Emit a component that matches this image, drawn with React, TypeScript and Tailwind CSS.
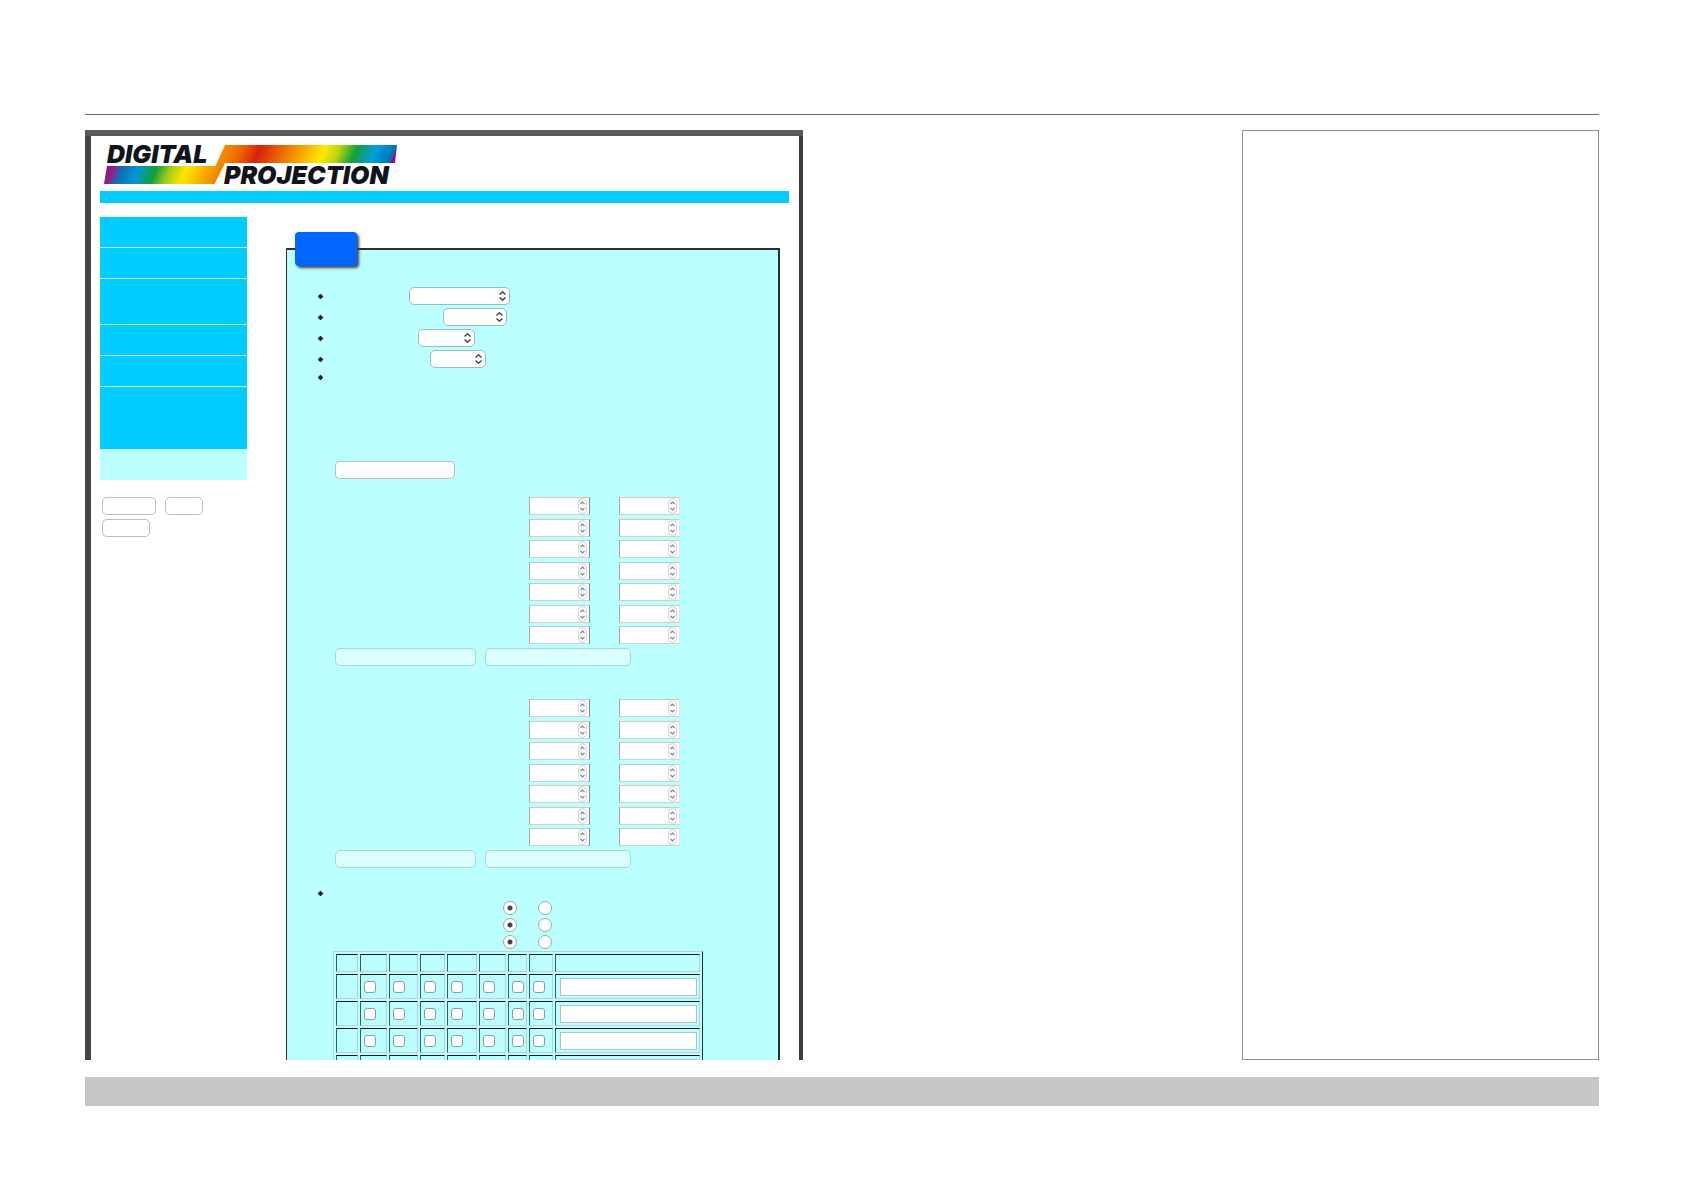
// settings page of the projector's built-in web server, shown inside a manual page
const NAV_ITEMS = [
  { label: "Home", className: "h-[31px] border-b bg-[#00ccff]" },
  { label: "Status", className: "h-[31px] border-b bg-[#00ccff]" },
  { label: "Main", className: "h-[46px] border-b bg-[#00ccff]" },
  { label: "Lamps", className: "h-[31px] border-b bg-[#00ccff]" },
  { label: "Control", className: "h-[31px] border-b bg-[#00ccff]" },
  { label: "Network", className: "h-[62px] bg-[#00ccff]" },
  { label: "Service", className: "h-[31px] bg-[#bbffff]" },
];

// margin and width of each drop-down in the list
const SELECTS = [
  { label: "Mode", className: "ml-[86px] w-[101px]" },
  { label: "Source", className: "ml-[120px] w-[64px]" },
  { label: "Level", className: "ml-[95px] w-[57px]" },
  { label: "Output", className: "ml-[107px] w-[56px]" },
];

const CHANNELS = [1, 2, 3, 4, 5, 6, 7];
const OPTIONS = ["Option 1", "Option 2", "Option 3"];
const EVENT_ROWS = [1, 2, 3, 4];
const DAYS = ["Mon", "Tue", "Wed", "Thu", "Fri", "Sat", "Sun"];

const cellClass =
  "border border-t-[#001a20] border-l-[#2a6566] border-r-[#c0ccd2] border-b-[#c0ccd2] p-0";

export default function App() {
  return (
    <div className="min-h-screen bg-white px-[85px] pt-[114px] font-['Liberation_Sans',sans-serif] text-sm">
      <hr className="border-[#666666]" />

      <div className="mt-[15px] grid grid-cols-[718fr_439fr_357fr]">
        <main className="h-[930px] overflow-hidden border-t-[6px] border-t-[#5a5a5a]">
          <div className="h-full border-r-4 border-l-[6px] border-r-[#3c3c3c] border-l-[#454548] pr-[10px] pl-[9px]">
            <Logo />
            <div className="h-3 bg-[#00ccff]" />
            <div className="flex items-start">
              <Sidebar />
              <SettingsPanel />
            </div>
          </div>
        </main>
        <aside className="col-start-3 border border-[#8f8f8f]" />
      </div>

      <footer className="mt-[17px] h-[29px] bg-[#c7c7c7]" />
    </div>
  );
}

function Logo() {
  return (
    <svg
      className="ml-1 block h-[55px] w-[294px]"
      viewBox="0 -9 294 55"
      role="img"
      aria-label="Digital Projection"
    >
      <defs>
        <linearGradient
          id="upper"
          gradientUnits="userSpaceOnUse"
          x1="115"
          y1="0"
          x2="300"
          y2="0"
          gradientTransform="skewX(-22)"
        >
          <stop offset="0" stopColor="#f59a00" />
          <stop offset="0.12" stopColor="#ee6c00" />
          <stop offset="0.23" stopColor="#d8200c" />
          <stop offset="0.34" stopColor="#ea6204" />
          <stop offset="0.48" stopColor="#f9b000" />
          <stop offset="0.58" stopColor="#ffe900" />
          <stop offset="0.66" stopColor="#b9d410" />
          <stop offset="0.75" stopColor="#12a038" />
          <stop offset="0.86" stopColor="#009ee0" />
          <stop offset="0.96" stopColor="#0071b8" />
          <stop offset="0.97" stopColor="#9a0c8c" />
          <stop offset="1" stopColor="#9a0c8c" />
        </linearGradient>
        <linearGradient
          id="lower"
          gradientUnits="userSpaceOnUse"
          x1="14"
          y1="0"
          x2="128"
          y2="0"
          gradientTransform="skewX(-22)"
        >
          <stop offset="0" stopColor="#8e1489" />
          <stop offset="0.05" stopColor="#9a1c8c" />
          <stop offset="0.1" stopColor="#1d64ae" />
          <stop offset="0.26" stopColor="#0096d6" />
          <stop offset="0.42" stopColor="#12a038" />
          <stop offset="0.54" stopColor="#9fca1c" />
          <stop offset="0.68" stopColor="#ffe600" />
          <stop offset="0.87" stopColor="#f9a800" />
          <stop offset="1" stopColor="#f08000" />
        </linearGradient>
      </defs>
      <path d="M121 0H293L291 18H120L110 39H100L111.500 21Z" fill="url(#upper)" />
      <path d="M3 21H112L121 18L110.500 39H0Z" fill="url(#lower)" />
      <g
        fill="#10151c"
        fontFamily="Inter, sans-serif"
        fontStyle="italic"
        fontWeight="900"
        fontSize="25"
      >
        <text x="3" y="18">
          DIGITAL
        </text>
        <text x="120" y="39">
          PROJECTION
        </text>
      </g>
    </svg>
  );
}

function Sidebar() {
  return (
    <div className="mt-[14px] w-[147px] shrink-0">
      <nav>
        {NAV_ITEMS.map((item) => (
          <a
            key={item.label}
            href="#"
            aria-label={item.label}
            className={`block border-[#e0ffff] ${item.className}`}
          />
        ))}
      </nav>
      <div className="mt-[17px] flex flex-wrap gap-x-[9px] gap-y-1 pl-[2px]">
        <PlainButton label="Standby" className="w-[54px] border-black/25 bg-white" />
        <PlainButton label="On" className="w-[38px] border-black/25 bg-white" />
        <PlainButton label="Logout" className="w-[48px] border-black/25 bg-white" />
      </div>
    </div>
  );
}

function SettingsPanel() {
  return (
    <section className="relative mt-[45px] mr-[9px] ml-[39px] min-w-0 flex-1 border-t-2 border-r-2 border-l border-[#2b2f30] bg-[#bbffff] pt-9 pl-[31px]">
      {/* tab that sits over the top border */}
      <div className="absolute -top-[18px] left-2 h-[34px] w-[62px] rounded-[4px] bg-[#0066ff] shadow-[2px_2px_3px_#444444]" />

      <ul>
        {SELECTS.map((item) => (
          <li key={item.label} className="flex h-[21px] items-start pt-px">
            <Bullet className="mt-[7px]" />
            <SelectBox label={item.label} className={item.className} />
          </li>
        ))}
        <li className="h-[14px] pt-[5px]">
          <Bullet />
        </li>
      </ul>

      <div className="mt-[77px] ml-[17px]">
        <PlainButton label="Update" className="w-[120px] border-black/25 bg-[#fdffff]" />
        <div className="mt-[18px]">
          <NumberGroup name="Group A" />
        </div>
        <div className="mt-[33px]">
          <NumberGroup name="Group B" />
        </div>
      </div>

      <div className="mt-[18px] h-[14px] pt-[5px]">
        <Bullet />
      </div>

      <div className="ml-[17px]">
        {OPTIONS.map((option) => (
          <div key={option} className="flex h-[17px] gap-[21px] pt-px pl-[168px]">
            <RadioButton name={option} value="on" defaultChecked />
            <RadioButton name={option} value="off" />
          </div>
        ))}
      </div>

      <EventTable />
    </section>
  );
}

function Bullet({ className = "" }: { className?: string }) {
  return (
    <svg className={`block size-[5px] shrink-0 ${className}`} viewBox="0 0 5 5">
      <path d="M2.500 0L5 2.500L2.500 5L0 2.500Z" fill="#000a0a" stroke="#000a0a" strokeWidth="0.500" />
    </svg>
  );
}

function PlainButton({ label, className }: { label: string; className: string }) {
  return (
    <button
      type="button"
      aria-label={label}
      className={`block h-[18px] rounded-[5px] border ${className}`}
    />
  );
}

function SelectBox({ label, className }: { label: string; className: string }) {
  return (
    <div className={`relative h-[18px] ${className}`}>
      <select
        aria-label={label}
        className="block h-full w-full appearance-none rounded-[5px] border border-[#9cbcbf] bg-white"
      />
      <svg
        className="pointer-events-none absolute top-1 right-1 h-[10px] w-[7px]"
        viewBox="0 0 7 10"
        fill="none"
        stroke="#3a3a3a"
        strokeWidth="1.300"
      >
        <path d="M0.500 3.500L3.500 0.800L6.500 3.500M0.500 6.500L3.500 9.200L6.500 6.500" />
      </svg>
    </div>
  );
}

function NumberGroup({ name }: { name: string }) {
  return (
    <div>
      <div className="grid h-[151px] grid-rows-7 pl-[194px]">
        {CHANNELS.map((channel) => (
          <div key={channel} className="flex gap-[29px]">
            <NumberBox label={`${name} start ${channel}`} className="border-r-[#7d8c8c]" />
            <NumberBox label={`${name} end ${channel}`} className="border-r-[#dfe4e4]" />
          </div>
        ))}
      </div>
      <div className="flex gap-[9px]">
        <PlainButton label={`Apply ${name}`} className="w-[141px] border-[#a6d6da] bg-[#dbffff]" />
        <PlainButton label={`Reset ${name}`} className="w-[146px] border-[#a6d6da] bg-[#dbffff]" />
      </div>
    </div>
  );
}

function NumberBox({ label, className }: { label: string; className: string }) {
  return (
    <div className="relative h-[18px] w-[61px]">
      <input
        type="number"
        aria-label={label}
        className={`block h-full w-full [appearance:textfield] border border-t-[#c2cccd] border-b-[#d0d2d1] border-l-[#a3abab] bg-white ${className}`}
      />
      <svg
        className="pointer-events-none absolute top-px right-[3px] h-4 w-[9px]"
        viewBox="0 0 9 16"
        fill="none"
      >
        <rect x="0.500" y="0.500" width="8" height="15" rx="4" fill="#fafafa" stroke="#d6d6da" />
        <path
          d="M2.500 6L4.500 4L6.500 6M2.500 10L4.500 12L6.500 10"
          stroke="#888888"
          strokeWidth="1.200"
        />
      </svg>
    </div>
  );
}

type RadioButtonProps = {
  name: string;
  value: string;
  defaultChecked?: boolean;
};

function RadioButton({ name, value, defaultChecked }: RadioButtonProps) {
  return (
    <input
      type="radio"
      name={name}
      value={value}
      defaultChecked={defaultChecked}
      aria-label={`${name} ${value}`}
      className="size-[14px] appearance-none rounded-full border border-[#9aabad] bg-white checked:bg-[radial-gradient(circle,#444444_2px,#ffffff_3px)]"
    />
  );
}

function EventTable() {
  return (
    <table className="ml-[15px] w-[370px] table-fixed border-separate border-spacing-[2px] border border-t-[#b9cfd2] border-r-[#1d3538] border-b-transparent border-l-[#b9d8da]">
      <colgroup>
        <col className="w-[22px]" />
        <col className="w-[27px]" />
        <col className="w-[29px]" />
        <col className="w-[25px]" />
        <col className="w-[30px]" />
        <col className="w-[27px]" />
        <col className="w-[19px]" />
        <col className="w-[24px]" />
        <col />
      </colgroup>
      <thead>
        <tr className="h-[18px]">
          <th className={cellClass} />
          {DAYS.map((day) => (
            <th key={day} aria-label={day} className={cellClass} />
          ))}
          <th className={cellClass} />
        </tr>
      </thead>
      <tbody>
        {EVENT_ROWS.map((row) => (
          <tr key={row} className="h-[25px]">
            <td className={cellClass} />
            {DAYS.map((day) => (
              <td key={day} className={cellClass}>
                <input
                  type="checkbox"
                  aria-label={`Event ${row} ${day}`}
                  className="ml-[3px] block size-3 appearance-none rounded-[3px] border border-[#8d9c9e] bg-white"
                />
              </td>
            ))}
            <td className={cellClass}>
              <input
                type="text"
                aria-label={`Event ${row} command`}
                className="ml-1 block h-[18px] w-[137px] border border-[#b5c2c3] bg-white"
              />
            </td>
          </tr>
        ))}
      </tbody>
    </table>
  );
}
